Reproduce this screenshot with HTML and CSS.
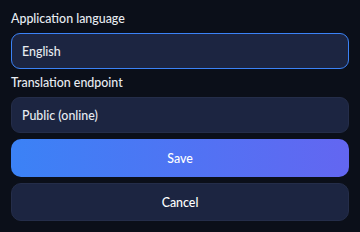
FILE: index.html
```html
<!DOCTYPE html>
<html lang="en">
<head>
  <meta charset="UTF-8">
  <meta name="viewport" content="width=device-width, initial-scale=1.0">
  <title>Settings</title>
  <link rel="stylesheet" href="styles.css">
</head>
<body>
  <form class="settings">
    <label class="field-label" for="lang">Application language</label>
    <input class="field focused" id="lang" type="text" value="English">
    <label class="field-label" for="endpoint">Translation endpoint</label>
    <input class="field" id="endpoint" type="text" value="Public (online)">
    <button type="button" class="btn btn-primary">Save</button>
    <button type="button" class="btn btn-secondary">Cancel</button>
  </form>
</body>
</html>
```

FILE: styles.css
```css
:root {
  --bg: #0b0f19;
  --fg: #e8ecf2;
  --field-bg: #1c2541;
  --field-border: #242d49;
  --focus: #3b82f6;
}
* { box-sizing: border-box; }
html, body {
  margin: 0;
  background: var(--bg);
}
body {
  color: var(--fg);
  font-family: Lato, "Noto Sans", sans-serif;
  font-size: 12.4px;
  font-weight: 500;
}
.settings {
  display: flex;
  flex-direction: column;
  gap: 6px;
  padding: 11px 11px;
}
.field-label {
  line-height: 16px;
  height: 16px;
}
.field {
  height: 36px;
  padding: 0 10px;
  border: 1px solid var(--field-border);
  border-radius: 9px;
  background: var(--field-bg);
  color: var(--fg);
  font: inherit;
  outline: none;
}
.field.focused {
  border-color: var(--focus);
}
.btn {
  height: 38px;
  border-radius: 10px;
  font: inherit;
  color: #fff;
  cursor: pointer;
}
.btn-primary {
  border: none;
  background: linear-gradient(90deg, #3b82f6, #6366f1);
}
.btn-secondary {
  border: 1px solid var(--field-border);
  background: var(--field-bg);
}
```
